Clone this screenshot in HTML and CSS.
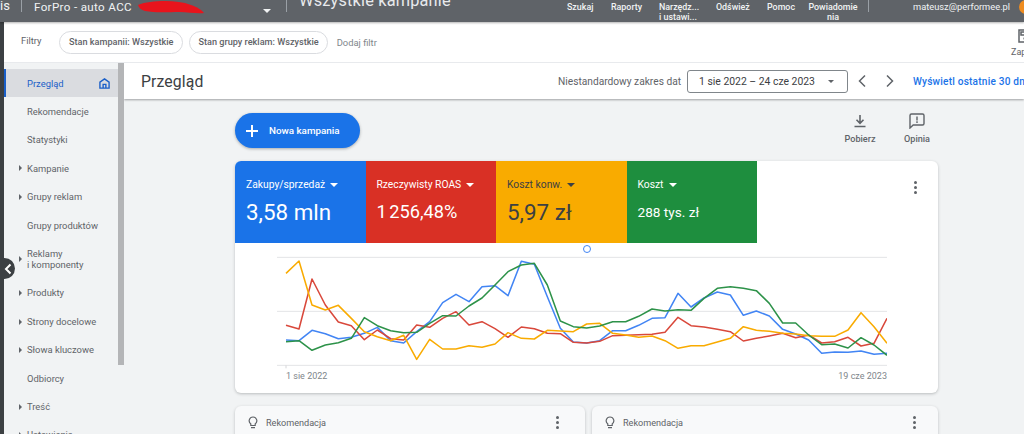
FILE: index.html
```html
<!DOCTYPE html>
<html lang="pl">
<head>
<meta charset="utf-8">
<title>Przegląd</title>
<link rel="stylesheet" href="styles.css">
</head>
<body>
<header class="topbar">
  <span class="tb-cut">is</span>
  <span class="tb-div tb-div-a"></span>
  <span class="tb-account">ForPro - auto ACC</span>
  <svg class="scribble" width="68" height="15" viewBox="0 0 68 15"><path d="M1 5 C8 2 18 1 28 1 C38 1 46 2 54 5 C60 7 65 10 67 13 C60 14 52 12 42 12 C32 12 18 13 8 11 C4 10 2 8 1 5 Z" fill="#e8141c"/></svg>
  <span class="tb-caret"></span>
  <span class="tb-div tb-div-b"></span>
  <span class="tb-title">Wszystkie kampanie</span>
  <nav class="tb-nav">
    <span class="tb-link tb-w-a">Szukaj</span>
    <span class="tb-link tb-w-b">Raporty</span>
    <span class="tb-link tb-w-c">Narzędz...<br>i ustawi...</span>
    <span class="tb-link tb-w-d">Odśwież</span>
    <span class="tb-link tb-w-e">Pomoc</span>
    <span class="tb-link tb-w-f tb-center">Powiadomie<br>nia</span>
  </nav>
  <span class="tb-div tb-div-c"></span>
  <span class="tb-email">mateusz@performee.pl</span>
  <span class="tb-avatar"></span>
</header>
<div class="shell">
  <div class="railstrip"></div>
  <div class="workspace">
    <div class="filters">
      <span class="f-label">Filtry</span>
      <span class="chip chip-a">Stan kampanii: Wszystkie</span>
      <span class="chip">Stan grupy reklam: Wszystkie</span>
      <span class="f-add">Dodaj filtr</span>
      <div class="f-save">
        <svg width="16" height="16" viewBox="0 0 16 16"><path d="M2 2h9l3 3v9H2z M4 4v3h6V4z" fill="none" stroke="#5f6368" stroke-width="1.5"/><circle cx="8" cy="10.5" r="1.6" fill="#5f6368"/></svg>
        <span>Zapisz</span>
      </div>
    </div>
    <div class="body">
      <aside class="sidenav">
        <a class="nav-item active"><span class="nav-text">Przegląd</span>
          <svg class="home" width="11" height="11" viewBox="0 0 12 12"><path d="M6 1 11 4.6V11H1V4.6Z M4.5 10.8V7h3v3.8" fill="none" stroke="#1a5fc8" stroke-width="1.5"/></svg></a>
        <a class="nav-item"><span class="nav-text">Rekomendacje</span></a>
        <a class="nav-item"><span class="nav-text">Statystyki</span></a>
        <a class="nav-item arrow"><span class="nav-text">Kampanie</span></a>
        <a class="nav-item arrow"><span class="nav-text">Grupy reklam</span></a>
        <a class="nav-item"><span class="nav-text">Grupy produktów</span></a>
        <a class="nav-item arrow tall"><span class="nav-text">Reklamy<br>i komponenty</span></a>
        <a class="nav-item arrow"><span class="nav-text">Produkty</span></a>
        <a class="nav-item arrow"><span class="nav-text">Strony docelowe</span></a>
        <a class="nav-item arrow"><span class="nav-text">Słowa kluczowe</span></a>
        <a class="nav-item"><span class="nav-text">Odbiorcy</span></a>
        <a class="nav-item arrow"><span class="nav-text">Treść</span></a>
        <a class="nav-item arrow"><span class="nav-text">Ustawienia</span></a>
      </aside>
      <div class="scrollbar"><div class="thumb"></div></div>
      <main class="main">
        <div class="pagehead">
          <h1 class="pagetitle">Przegląd</h1>
          <span class="range-label">Niestandardowy zakres dat</span>
          <span class="range-box"><span>1 sie 2022 – 24 cze 2023</span><i class="range-caret"></i></span>
          <svg class="pager" width="12" height="14" viewBox="0 0 12 14"><path d="M9 1.5 3.5 7 9 12.5" fill="none" stroke="#5f6368" stroke-width="1.5"/></svg>
          <svg class="pager pager-next" width="12" height="14" viewBox="0 0 12 14"><path d="M3 1.5 8.5 7 3 12.5" fill="none" stroke="#5f6368" stroke-width="1.5"/></svg>
          <span class="range-link">Wyświetl ostatnie 30 dni</span>
        </div>
        <div class="content">
          <div class="actions">
            <button class="fab"><svg width="14" height="14" viewBox="0 0 14 14"><path d="M7 1v12M1 7h12" stroke="#fff" stroke-width="2"/></svg><span>Nowa kampania</span></button>
            <div class="act act-a">
              <svg width="16" height="16" viewBox="0 0 16 16"><path d="M8 2v8M4.5 6.8 8 10.3l3.5-3.5M2.5 13.5h11" fill="none" stroke="#5f6368" stroke-width="1.6"/></svg>
              <span>Pobierz</span>
            </div>
            <div class="act act-b">
              <svg width="16" height="16" viewBox="0 0 16 16"><path d="M2.5 1h11A1.5 1.5 0 0 1 15 2.5v8a1.5 1.5 0 0 1-1.5 1.5H4.2L1 15V2.5A1.5 1.5 0 0 1 2.5 1z" fill="none" stroke="#5f6368" stroke-width="1.4"/><path d="M8 3.6v3.8M8 8.3v1.6" stroke="#5f6368" stroke-width="1.4"/></svg>
              <span>Opinia</span>
            </div>
          </div>
          <section class="card chart-card">
            <div class="scores">
              <div class="score s-blue"><div class="s-name">Zakupy/sprzedaż <i class="s-caret"></i></div><div class="s-val s-big">3,58 mln</div></div>
              <div class="score s-red"><div class="s-name">Rzeczywisty ROAS <i class="s-caret"></i></div><div class="s-val s-mid">1 256,48%</div></div>
              <div class="score s-yellow"><div class="s-name">Koszt konw. <i class="s-caret"></i></div><div class="s-val s-big">5,97 zł</div></div>
              <div class="score s-green"><div class="s-name">Koszt <i class="s-caret"></i></div><div class="s-val s-small">288 tys. zł</div></div>
              <span class="dots dots-main"><i></i><i></i><i></i></span>
            </div>
            <span class="handle"></span>
            <svg class="plot" width="610" height="120" viewBox="-27 0 1830 360">
              <path d="M-27 22H1803M-27 184H1803M-27 346H1803" stroke="#e3e4e6" stroke-width="3" fill="none"/>
              <path d="M0 346v9" stroke="#d5d6d8" stroke-width="3" fill="none"/>
              <polyline class="ln ln-blue" points="0,270 39,272 78,241 118,251 157,266 196,262 235,250 274,232 314,272 353,279 392,245 431,215 470,158 510,133 549,155 588,110 627,107 666,137 706,34 745,43 784,140 823,235 862,276 902,279 941,272 980,242 1019,242 1058,226 1098,205 1137,203 1176,130 1215,171 1254,144 1294,126 1333,135 1372,196 1411,183 1450,198 1490,238 1529,252 1568,270 1607,310 1646,306 1686,307 1725,303 1764,313 1803,310"/>
              <polyline class="ln ln-red" points="0,226 39,237 78,87 118,165 157,216 196,227 235,269 274,240 314,266 353,270 392,225 431,232 470,205 510,185 549,225 588,215 627,236 666,262 706,231 745,236 784,250 823,251 862,277 902,279 941,274 980,257 1019,256 1058,254 1098,253 1137,247 1176,202 1215,227 1254,231 1294,238 1333,245 1372,273 1411,265 1450,258 1490,250 1529,263 1568,255 1607,279 1646,275 1686,262 1725,288 1764,280 1803,205"/>
              <polyline class="ln ln-yellow" points="0,70 39,33 78,165 118,180 157,166 196,205 235,245 274,260 314,272 353,256 392,328 431,268 470,297 510,297 549,287 588,292 627,282 666,248 706,265 745,267 784,241 823,243 862,245 902,222 941,220 980,250 1019,255 1058,262 1098,258 1137,272 1176,295 1215,287 1254,287 1294,276 1333,265 1372,230 1411,241 1450,244 1490,250 1529,252 1568,257 1607,259 1646,259 1686,240 1725,188 1764,230 1803,280"/>
              <polyline class="ln ln-green" points="0,275 39,272 78,301 118,285 157,278 196,265 235,203 274,227 314,242 353,248 392,247 431,220 470,197 510,198 549,168 588,144 627,105 666,65 706,45 745,40 784,105 823,213 862,230 902,234 941,228 980,215 1019,215 1058,199 1098,177 1137,183 1176,179 1215,181 1254,145 1294,115 1333,110 1372,115 1411,122 1450,160 1490,219 1529,219 1568,255 1607,284 1646,282 1686,294 1725,263 1764,285 1803,316"/>
            </svg>
            <div class="axis"><span>1 sie 2022</span><span>19 cze 2023</span></div>
          </section>
          <div class="recs">
            <section class="card rec rec-a">
              <svg width="10" height="13" viewBox="0 0 10 13"><path d="M5 1a3.8 3.8 0 0 0-2.2 6.9V9.5h4.4V7.9A3.8 3.8 0 0 0 5 1zM3 11.6h4" fill="none" stroke="#5f6368" stroke-width="1.2"/></svg>
              <span class="rec-title">Rekomendacja</span>
              <span class="dots"><i></i><i></i><i></i></span>
            </section>
            <section class="card rec rec-b">
              <svg width="10" height="13" viewBox="0 0 10 13"><path d="M5 1a3.8 3.8 0 0 0-2.2 6.9V9.5h4.4V7.9A3.8 3.8 0 0 0 5 1zM3 11.6h4" fill="none" stroke="#5f6368" stroke-width="1.2"/></svg>
              <span class="rec-title">Rekomendacja</span>
              <span class="dots"><i></i><i></i><i></i></span>
            </section>
          </div>
        </div>
      </main>
    </div>
  </div>
</div>
<button class="collapse"><svg width="10" height="12" viewBox="0 0 10 12"><path d="M7.5 1.5 3 6l4.5 4.5" fill="none" stroke="#fff" stroke-width="2"/></svg></button>
</body>
</html>
```
FILE: styles.css
```css
* { box-sizing: border-box; }
html, body { margin: 0; padding: 0; }
body { width: 1024px; height: 434px; overflow: hidden; font-family: Roboto, "Liberation Sans", sans-serif; background: #f1f3f4; color: #5f6368; position: relative; }

.topbar { height: 22px; background: #5f6368; color: #f1f3f4; display: flex; align-items: center; overflow: hidden; position: relative; box-shadow: 0 1px 2px rgba(0,0,0,.3); z-index: 2; }
.tb-cut { width: 21px; flex: none; font-size: 13px; margin-top: -11px; }
.tb-div { width: 1px; background: #9aa0a6; flex: none; margin-top: -10px; height: 12px; }
.tb-div-b { margin-left: 15px; }
.tb-account { margin-left: 12px; font-size: 11.6px; letter-spacing: .35px; width: 221px; flex: none; margin-top: -9px; white-space: nowrap; }
.scribble { position: absolute; left: 137px; top: 0; }
.tb-caret { width: 0; height: 0; border: 4px solid transparent; border-top: 4px solid #f1f3f4; border-bottom: 0; margin-left: 8px; flex: none; }
.tb-title { margin-left: 12px; font-size: 16.3px; white-space: nowrap; width: 268px; flex: none; margin-top: -21px; color: #e8eaed; letter-spacing: .2px; line-height: 20px; }
.tb-nav { display: flex; align-items: flex-start; font-size: 8.9px; font-weight: 500; line-height: 10px; flex: none; width: 301px; height: 22px; padding-top: 1px; }
.tb-link { flex: none; white-space: nowrap; display: block; padding-top: 1px; }
.tb-w-a { width: 44px; }
.tb-w-b { width: 48px; }
.tb-w-c { width: 57px; }
.tb-w-d { width: 51px; }
.tb-w-e { width: 41px; }
.tb-w-f { width: 60px; text-align: left; }
.tb-center { text-align: center; width: 50px; }
.tb-email { margin-left: 44px; font-size: 9.3px; white-space: nowrap; flex: none; margin-top: -9px; }
.tb-avatar { width: 14px; height: 14px; border-radius: 50%; background: #ef8c20; margin-left: 9px; flex: none; margin-top: -8px; }

.shell { display: flex; height: 412px; }
.railstrip { width: 4px; background: #3c4043; flex: none; }
.workspace { flex: 1; min-width: 0; display: flex; flex-direction: column; }
.filters { height: 41px; background: #fff; border-bottom: 1px solid #e8eaed; display: flex; align-items: center; font-size: 9.15px; flex: none; padding-left: 17px; position: relative; overflow: hidden; }
.f-label { width: 38px; flex: none; margin-top: -3px; font-size: 9.4px; }
.chip { height: 23px; border: 1px solid #dadce0; border-radius: 12px; display: flex; align-items: center; padding: 0 8px; margin-right: 6px; font-weight: 500; white-space: nowrap; flex: none; }
.chip-a { padding: 0 9px; }
.f-add { margin-left: 3px; color: #80868b; font-size: 9.4px; flex: none; }
.f-save { margin-left: auto; display: flex; flex-direction: column; align-items: flex-start; width: 13px; flex: none; gap: 3px; font-size: 9px; white-space: nowrap; }
.f-save svg { margin-left: 6px; flex: none; }

.body { display: flex; flex: 1; min-height: 0; }
.sidenav { width: 114px; flex: none; padding-top: 6px; background: #f1f3f4; overflow: hidden; }
.nav-item { display: flex; align-items: center; height: 28.4px; padding-left: 23px; font-size: 9.4px; color: #5f6368; position: relative; }
.nav-item .nav-text { line-height: 11.3px; white-space: nowrap; }
.nav-item.tall { height: 39.6px; }
.nav-item.arrow::before { content: ""; position: absolute; left: 15px; top: 50%; margin-top: -3px; border: 3px solid transparent; border-left: 3px solid #5f6368; border-right: 0; }
.nav-item.active { background: #dadce0; border-left: 2px solid #1a5fc8; padding-left: 21px; color: #1a5fc8; justify-content: space-between; padding-right: 8px; }
.scrollbar { width: 6px; flex: none; background: #f1f3f4; }
.thumb { height: 302px; background: #b4b5b7; }
.main { flex: 1; min-width: 0; background: #f1f3f4; overflow: hidden; }
.pagehead { height: 36px; background: #fff; box-shadow: 0 1px 2px rgba(60,64,67,.45); display: flex; align-items: center; padding-left: 17px; position: relative; white-space: nowrap; }
.pagetitle { font-size: 15.8px; font-weight: 400; margin: 0; color: #3c4043; width: 417px; flex: none; letter-spacing: .1px; }
.range-label { font-size: 10.2px; width: 129px; flex: none; color: #5f6368; }
.range-box { width: 161px; height: 23px; border: 1px solid #80868b; border-radius: 3px; display: flex; align-items: center; justify-content: space-between; padding: 0 13px 0 11px; font-size: 10.4px; flex: none; color: #3c4043; }
.range-caret { width: 0; height: 0; border: 3.5px solid transparent; border-top: 3.5px solid #5f6368; border-bottom: 0; }
.pager { margin-left: 8px; flex: none; }
.pager-next { margin-left: 16px; }
.range-link { margin-left: 17px; font-size: 10.1px; color: #1a73e8; font-weight: 500; flex: none; letter-spacing: .2px; }

.content { padding: 14px 0 0 111px; }
.actions { display: flex; align-items: flex-start; height: 48px; width: 703px; }
.fab { width: 125px; height: 35px; border: 0; border-radius: 18px; background: #1a73e8; color: #fff; display: flex; align-items: center; gap: 10px; padding: 0 0 0 10px; font: 500 9.8px Roboto, sans-serif; box-shadow: 0 1px 3px rgba(60,64,67,.4); flex: none; }
.act { display: flex; flex-direction: column; align-items: center; gap: 5px; font-size: 9.1px; font-weight: 500; color: #5f6368; flex: none; width: 40px; }
.act-a { margin-left: 480px; }
.act-b { margin-left: 17px; }
.card { background: #fff; border-radius: 6px; box-shadow: 0 1px 3px rgba(60,64,67,.3); }
.chart-card { width: 703px; height: 232px; position: relative; }
.scores { display: flex; height: 82px; position: relative; }
.score { width: 130.5px; height: 82px; padding: 18px 0 0 11px; color: #fff; flex: none; }
.s-blue { background: #1a73e8; border-top-left-radius: 6px; }
.s-red { background: #d93025; }
.s-yellow { background: #f9ab00; color: #3c4043; }
.s-green { background: #1e8e3e; }
.s-name { font-size: 10.3px; line-height: 12px; white-space: nowrap; display: flex; align-items: center; gap: 5px; }
.s-caret { width: 0; height: 0; border: 4px solid transparent; border-top: 4px solid currentColor; border-bottom: 0; }
.s-val { white-space: nowrap; display: flex; align-items: center; height: 27px; margin-top: 7px; }
.s-big { font-size: 22.4px; }
.s-mid { font-size: 18.2px; word-spacing: -2px; }
.s-small { font-size: 13.6px; }
.dots { display: flex; flex-direction: column; gap: 2px; width: 3px; }
.dots i { width: 3px; height: 3px; border-radius: 50%; background: #5f6368; display: block; }
.dots-main { margin-left: auto; margin-right: 21px; margin-top: 20px; height: 13px; }
.handle { position: absolute; left: 348px; top: 84px; width: 8px; height: 8px; border: 1.3px solid #4285f4; border-radius: 50%; background: #fff; }
.plot { display: block; margin: 7px 0 0 42px; }
.ln { fill: none; stroke-width: 4.6; stroke-linejoin: round; }
.ln-blue { stroke: #4285f4; }
.ln-red { stroke: #d9483b; }
.ln-yellow { stroke: #f9ab00; }
.ln-green { stroke: #2d9249; }
.axis { display: flex; justify-content: space-between; font-size: 9px; color: #80868b; margin: 1px 51px 0 51px; }
.recs { display: flex; gap: 7px; margin-top: 13px; }
.rec { height: 60px; background: #f8f9fa; display: flex; align-items: flex-start; padding: 10px 0 0 13px; font-size: 9.1px; }
.rec-a { width: 350px; }
.rec-b { width: 346px; }
.rec-title { margin-left: 8px; margin-top: 2px; color: #5f6368; }
.rec .dots { margin-left: auto; margin-right: 22px; }
.rec-a .dots { margin-right: 26px; }

.collapse { position: absolute; left: -6px; top: 258px; width: 21px; height: 21px; border: 0; padding: 0 0 0 6px; border-radius: 50%; background: #3c4043; display: flex; align-items: center; justify-content: center; z-index: 3; }
```
